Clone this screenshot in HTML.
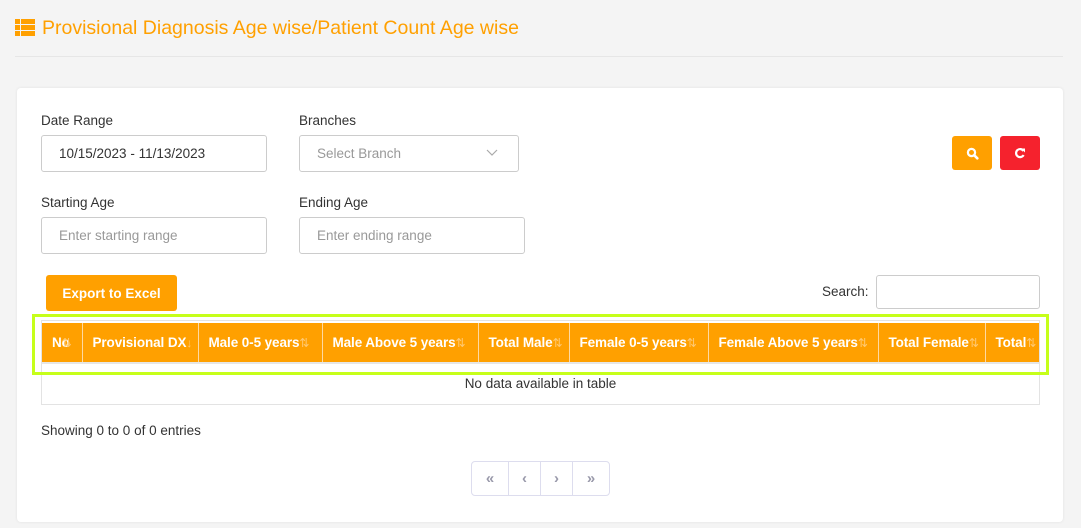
<!DOCTYPE html>
<html><head><style>
*{box-sizing:border-box;margin:0;padding:0}
body{width:1081px;height:528px;background:#f4f4f4;font-family:"Liberation Sans",sans-serif;position:relative;overflow:hidden;color:#333}
.abs{position:absolute}
.title{left:42px;top:17px;font-size:19.5px;color:#ffa000;white-space:nowrap}
.hline{left:15px;top:56px;width:1048px;height:1px;background:#e6e6e6}
.card{left:17px;top:88px;width:1046px;height:434px;background:#fff;border-radius:4px;box-shadow:0 0 3px rgba(0,0,0,.08)}
.lbl{font-size:13.5px;color:#333}
.inp{border:1px solid #ccc;border-radius:3px;height:37px;font-size:13.5px;padding:0 17px;display:flex;align-items:center;background:#fff}
.ph{color:#999}
.btn{border-radius:3px;display:flex;align-items:center;justify-content:center;color:#fff}
table{border-collapse:collapse;position:absolute;left:42px;top:323px;width:997px}
th{background:#ffa000;color:#fff;font-size:13.5px;font-weight:bold;height:39px;text-align:left;padding-left:10px;border-right:1px solid #ffd9a0;white-space:nowrap;position:relative;letter-spacing:-0.1px}
th span{color:#ffc870;font-weight:normal;font-size:12px}
</style></head><body>
<svg class="abs" style="left:15px;top:19px" width="20" height="17" viewBox="0 0 20 17"><g fill="#ffa000"><rect x="0" y="0" width="5" height="5"/><rect x="6" y="0" width="14" height="5"/><rect x="0" y="6" width="5" height="5"/><rect x="6" y="6" width="14" height="5"/><rect x="0" y="12" width="5" height="5"/><rect x="6" y="12" width="14" height="5"/></g></svg>
<div class="abs title">Provisional Diagnosis Age wise/Patient Count Age wise</div>
<div class="abs hline"></div>
<div class="abs card"></div>
<div class="abs lbl" style="left:41px;top:113px">Date Range</div>
<div class="abs lbl" style="left:299px;top:113px">Branches</div>
<div class="abs inp" style="left:41px;top:135px;width:226px">10/15/2023 - 11/13/2023</div>
<div class="abs inp ph" style="left:299px;top:135px;width:220px">Select Branch
<svg style="position:absolute;right:20px;top:13px" width="12" height="8" viewBox="0 0 12 8"><path d="M1 1l5 5 5-5" fill="none" stroke="#aaa" stroke-width="1.2"/></svg></div>
<div class="abs btn" style="left:952px;top:136px;width:40px;height:34px;background:#ffa000"><svg width="13" height="13" viewBox="0 0 13 13"><circle cx="5.5" cy="5.5" r="3.6" fill="none" stroke="#fff" stroke-width="2.2"/><path d="M8.3 8.3l3 3" stroke="#fff" stroke-width="2.6" stroke-linecap="round"/></svg></div>
<div class="abs btn" style="left:1000px;top:136px;width:40px;height:34px;background:#f5222d"><svg width="12" height="12" viewBox="0 0 12 12"><path d="M9.5 4A4 4 0 1 0 9.6 8" fill="none" stroke="#fff" stroke-width="2.2"/><path d="M7 1.5l4 0 0 4z" fill="#fff"/></svg></div>
<div class="abs lbl" style="left:41px;top:195px">Starting Age</div>
<div class="abs lbl" style="left:299px;top:195px">Ending Age</div>
<div class="abs inp ph" style="left:41px;top:217px;width:226px">Enter starting range</div>
<div class="abs inp ph" style="left:299px;top:217px;width:226px">Enter ending range</div>
<div class="abs btn" style="left:46px;top:275px;width:131px;height:36px;background:#ffa000;font-size:13.5px;font-weight:bold">Export to Excel</div>
<div class="abs lbl" style="left:822px;top:284px">Search:</div>
<div class="abs" style="left:876px;top:275px;width:164px;height:34px;border:1px solid #ccc;border-radius:3px"></div>
<div class="abs" style="left:41px;top:320px;width:999px;height:85px;border:1px solid #e3e3e3"></div>
<table>
<tr><th style="width:40px">No<span style="margin-left:-8px">⇅</span></th><th style="width:116px">Provisional DX<span>↓</span></th><th style="width:124px">Male 0-5 years<span>⇅</span></th><th style="width:156px">Male Above 5 years<span>⇅</span></th><th style="width:91px">Total Male<span>⇅</span></th><th style="width:139px">Female 0-5 years<span>⇅</span></th><th style="width:170px">Female Above 5 years<span>⇅</span></th><th style="width:107px">Total Female<span>⇅</span></th><th style="width:54px;border-right:none">Total<span>⇅</span></th></tr>
</table>
<div class="abs" style="left:42px;top:362px;width:997px;height:2px;background:#e6e6e6"></div>
<div class="abs lbl" style="left:0;width:1081px;text-align:center;top:376px">No data available in table</div>
<div class="abs" style="left:32px;top:314px;width:1017px;height:61px;border:3px solid #c6ff1a"></div>
<div class="abs lbl" style="left:41px;top:423px">Showing 0 to 0 of 0 entries</div>
<div class="abs" style="left:471px;top:461px;width:139px;height:35px;border:1px solid #dde;border-radius:4px;display:flex;color:#99a;font-weight:bold;font-size:15px">
<div style="width:37px;border-right:1px solid #dde;display:flex;align-items:center;justify-content:center">«</div>
<div style="width:32px;border-right:1px solid #dde;display:flex;align-items:center;justify-content:center">‹</div>
<div style="width:32px;border-right:1px solid #dde;display:flex;align-items:center;justify-content:center">›</div>
<div style="flex:1;display:flex;align-items:center;justify-content:center">»</div>
</div>
</body></html>
